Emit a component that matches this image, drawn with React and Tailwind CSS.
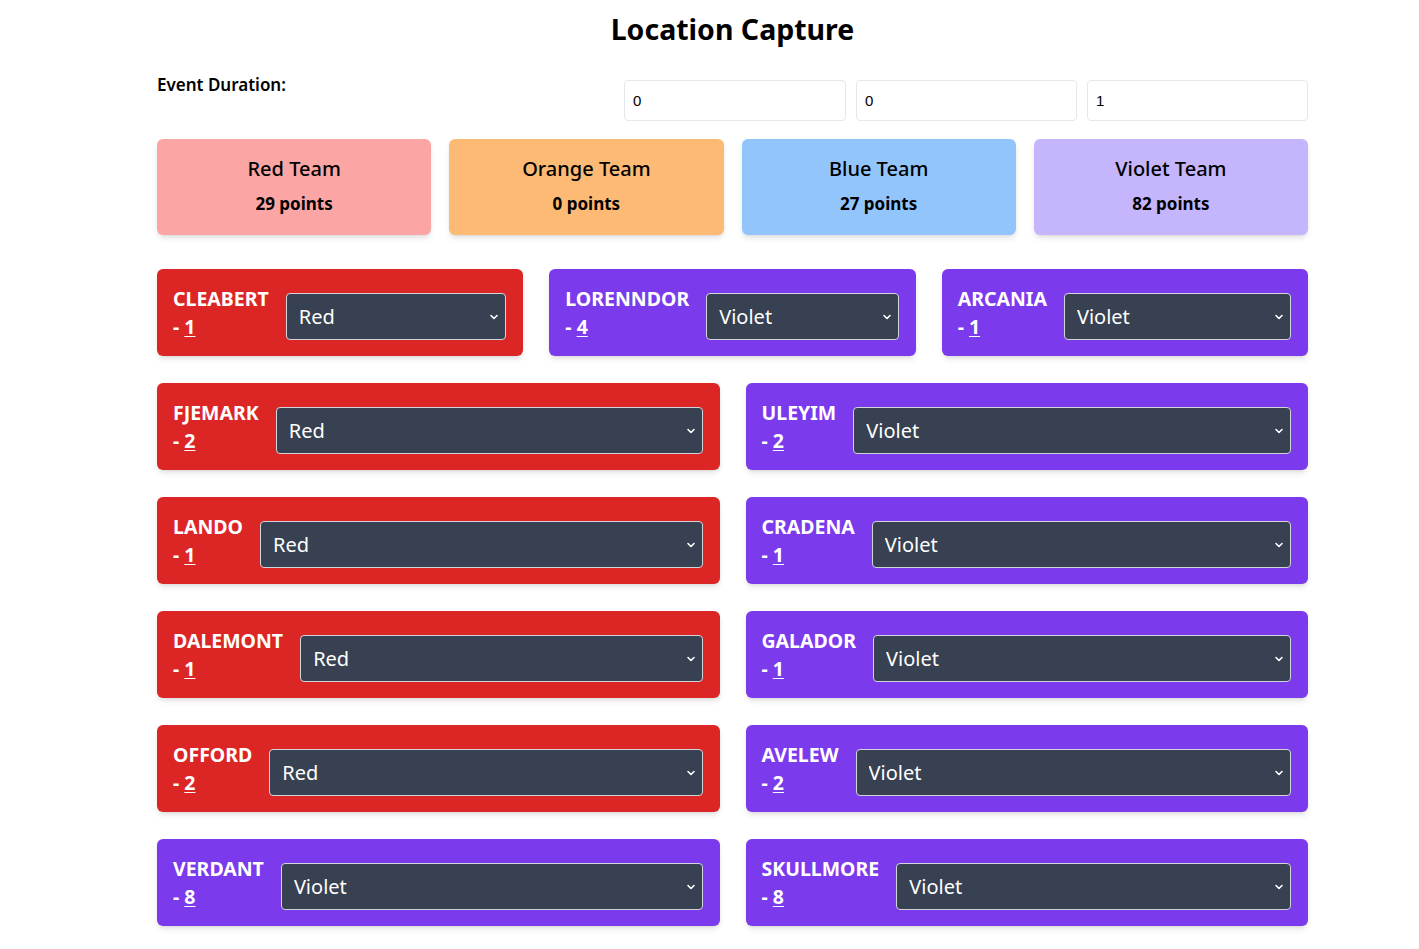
import React from "react";

const teams = [
  { name: "Red Team", points: 29, cls: "bg-[#fca5a5]" },
  { name: "Orange Team", points: 0, cls: "bg-[#fdba74]" },
  { name: "Blue Team", points: 27, cls: "bg-[#93c5fd]" },
  { name: "Violet Team", points: 82, cls: "bg-[#c4b5fd]" },
];

const rows = [
  [
    ["CLEABERT", 1, "Red"],
    ["LORENNDOR", 4, "Violet"],
    ["ARCANIA", 1, "Violet"],
  ],
  [
    ["FJEMARK", 2, "Red"],
    ["ULEYIM", 2, "Violet"],
  ],
  [
    ["LANDO", 1, "Red"],
    ["CRADENA", 1, "Violet"],
  ],
  [
    ["DALEMONT", 1, "Red"],
    ["GALADOR", 1, "Violet"],
  ],
  [
    ["OFFORD", 2, "Red"],
    ["AVELEW", 2, "Violet"],
  ],
  [
    ["VERDANT", 8, "Violet"],
    ["SKULLMORE", 8, "Violet"],
  ],
];

function Chevron() {
  return (
    <svg
      className="pointer-events-none absolute right-[7px] top-1/2 -translate-y-1/2"
      width="10"
      height="10"
      viewBox="0 0 10 10"
      fill="none"
    >
      <path d="M2 3.5 L5 6.5 L8 3.5" stroke="white" strokeWidth="1.6" strokeLinecap="round" strokeLinejoin="round" />
    </svg>
  );
}

function LocationCard({ name, value, team }) {
  const bg = team === "Red" ? "bg-[#dc2626]" : "bg-[#7c3aed]";
  return (
    <div className={`flex-1 ${bg} rounded-md shadow-md flex items-end gap-[17px] pl-4 pr-[17px] pt-4 pb-[15px]`}>
      <div className="text-white font-bold text-[19.5px] leading-7 whitespace-nowrap">
        <div>{name}</div>
        <div>
          - <span className="underline underline-offset-2">{value}</span>
        </div>
      </div>
      <div className="relative flex-1 mb-[1px]">
        <select
          defaultValue={team}
          className="appearance-none w-full h-[47px] bg-[#374151] text-white text-[20px] pl-3 pr-6 border border-[#d1d5db] rounded-[4px] outline-none"
        >
          <option>Red</option>
          <option>Orange</option>
          <option>Blue</option>
          <option>Violet</option>
        </select>
        <Chevron />
      </div>
    </div>
  );
}

export default function App() {
  return (
    <div className="min-h-screen bg-white" style={{ fontFamily: '"Noto Sans", "Open Sans", sans-serif' }}>
      <div className="ml-[157px] w-[1151px] pt-[11px] pb-6">
        <h1 className="text-center text-[28.5px] leading-9 font-bold text-black">Location Capture</h1>
        <div className="flex mt-[26px]">
          <div className="flex-1 text-[17px] leading-6 font-semibold text-black">Event Duration:</div>
          <div className="flex gap-[10px] mt-[7px]">
            {["0", "0", "1"].map((v, i) => (
              <input
                key={i}
                defaultValue={v}
                className={`${i === 0 ? "w-[222px]" : "w-[221px]"} h-[41px] border border-[#e5e7eb] rounded-[4px] px-[8px] text-[15px] text-black outline-none`}
                style={{ fontFamily: '"Liberation Sans", Arial, sans-serif' }}
              />
            ))}
          </div>
        </div>
        <div className="flex gap-[18px] mt-[18px]">
          {teams.map((t) => (
            <div
              key={t.name}
              className={`flex-1 h-[96px] ${t.cls} rounded-md shadow-md flex flex-col items-center pt-4 text-black`}
            >
              <div className="text-[20px] leading-7 font-medium">{t.name}</div>
              <div className="text-[17px] leading-6 font-bold mt-[9px]">{t.points} points</div>
            </div>
          ))}
        </div>
        <div className="flex flex-col gap-[27px] mt-[34px]">
          {rows.map((row, i) => (
            <div key={i} className="flex gap-[26px]">
              {row.map(([n, v, t]) => (
                <LocationCard key={n} name={n} value={v} team={t} />
              ))}
            </div>
          ))}
        </div>
      </div>
    </div>
  );
}
